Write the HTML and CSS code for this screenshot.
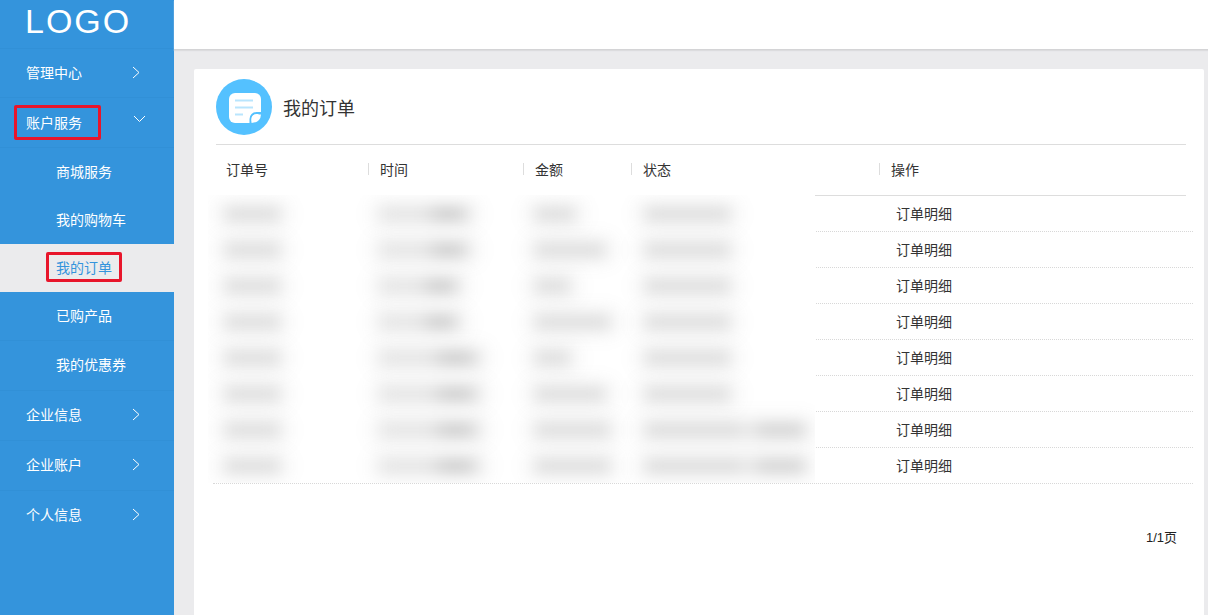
FILE: index.html
```html
<!DOCTYPE html>
<html lang="zh-CN">
<head>
<meta charset="utf-8">
<title>我的订单</title>
<link rel="stylesheet" href="styles.css">
</head>
<body>
<div class="app">
  <aside class="sidebar">
    <div class="logo">LOGO</div>
    <nav class="nav">
      <a class="nav-item">管理中心<svg class="chev" viewBox="0 0 8 13"><path d="M1 1l6 5.500L1 12"/></svg></a>
      <a class="nav-item">账户服务<svg class="chev-down" viewBox="0 0 13 8"><path d="M1 1l5.500 5.500L12 1"/></svg><span class="mark mark-a"></span></a>
      <a class="sub-item">商城服务</a>
      <a class="sub-item">我的购物车</a>
      <a class="sub-item sub-active">我的订单<span class="mark mark-b"></span></a>
      <a class="sub-item sub-line">已购产品</a>
      <a class="sub-item sub-last">我的优惠券</a>
      <a class="nav-item nav-low">企业信息<svg class="chev" viewBox="0 0 8 13"><path d="M1 1l6 5.500L1 12"/></svg></a>
      <a class="nav-item nav-low">企业账户<svg class="chev" viewBox="0 0 8 13"><path d="M1 1l6 5.500L1 12"/></svg></a>
      <a class="nav-item nav-low nav-final">个人信息<svg class="chev" viewBox="0 0 8 13"><path d="M1 1l6 5.500L1 12"/></svg></a>
    </nav>
  </aside>
  <div class="main">
    <header class="topbar"></header>
    <section class="card">
      <div class="title-row">
        <svg class="title-icon" viewBox="0 0 56 56">
          <circle cx="28" cy="28" r="28" fill="#54c1ff"/>
          <path d="M19 14h20a6 6 0 0 1 6 6v13l-11 11H19a6 6 0 0 1-6-6V20a6 6 0 0 1 6-6z" fill="#fff"/>
          <path d="M19 21.500h18M19 28.500h18M19 35.500h8" stroke="#b9e5fd" stroke-width="2" fill="none"/>
          <path d="M34.500 45v-5a6 6 0 0 1 6-6h5" stroke="#54c1ff" stroke-width="2" fill="none"/>
          <path d="M35.500 44v-4a4.500 4.500 0 0 1 4.500-4.500h5q-.5 8-9.500 8.500z" fill="#fff"/>
        </svg>
        <h1 class="title">我的订单</h1>
      </div>
      <div class="table-head">
        <div class="th">订单号</div>
        <div class="th th-sep">时间</div>
        <div class="th th-sep">金额</div>
        <div class="th th-sep">状态</div>
        <div class="th th-sep">操作</div>
      </div>
      <div class="rows">
        <div class="row"><a class="op">订单明细</a></div>
        <div class="row"><a class="op">订单明细</a></div>
        <div class="row"><a class="op">订单明细</a></div>
        <div class="row"><a class="op">订单明细</a></div>
        <div class="row"><a class="op">订单明细</a></div>
        <div class="row"><a class="op">订单明细</a></div>
        <div class="row"><a class="op">订单明细</a></div>
        <div class="row"><a class="op">订单明细</a></div>
        <div class="redacted">
          <div class="r-row"><i class="bar" style="width:55px"></i><i class="bar bar-time" style="width:90px"></i><i class="bar" style="width:40px"></i><i class="bar" style="width:85px"></i></div>
          <div class="r-row"><i class="bar" style="width:55px"></i><i class="bar bar-time" style="width:90px"></i><i class="bar" style="width:70px"></i><i class="bar" style="width:85px"></i></div>
          <div class="r-row"><i class="bar" style="width:55px"></i><i class="bar bar-time" style="width:80px"></i><i class="bar" style="width:35px"></i><i class="bar" style="width:85px"></i></div>
          <div class="r-row"><i class="bar" style="width:55px"></i><i class="bar bar-time" style="width:80px"></i><i class="bar" style="width:75px"></i><i class="bar" style="width:85px"></i></div>
          <div class="r-row"><i class="bar" style="width:55px"></i><i class="bar bar-time" style="width:100px"></i><i class="bar" style="width:35px"></i><i class="bar" style="width:85px"></i></div>
          <div class="r-row"><i class="bar" style="width:55px"></i><i class="bar bar-time" style="width:100px"></i><i class="bar" style="width:70px"></i><i class="bar" style="width:85px"></i></div>
          <div class="r-row"><i class="bar" style="width:55px"></i><i class="bar bar-time" style="width:100px"></i><i class="bar" style="width:75px"></i><i class="bar bar-long" style="width:160px"></i></div>
          <div class="r-row"><i class="bar" style="width:55px"></i><i class="bar bar-time" style="width:100px"></i><i class="bar" style="width:75px"></i><i class="bar bar-long" style="width:160px"></i></div>
        </div>
      </div>
      <div class="pager">1/1页</div>
    </section>
  </div>
</div>
</body>
</html>
```
FILE: styles.css
```css
* { box-sizing: border-box; }
html, body { margin: 0; height: 100%; overflow: hidden; }
body {
  font-family: "Noto Sans CJK SC", "Liberation Sans", sans-serif;
  font-size: 14px;
  color: #333;
  background: #ebebed;
}
.app { display: flex; height: 615px; }

.sidebar { width: 174px; flex: none; background: #3494dc; color: #fff; }
.logo {
  height: 49px;
  padding-left: 25px;
  font-family: "Liberation Sans", sans-serif;
  font-size: 34px;
  line-height: 42px;
  letter-spacing: 2px;
  border-bottom: 1px solid #3190d7;
}
.nav { display: flex; flex-direction: column; }
.nav-item {
  position: relative;
  display: flex;
  align-items: center;
  height: 50px;
  padding: 0 0 2px 26px;
  border-bottom: 1px solid #3190d7;
}
.nav-item:first-child { height: 49px; }
.nav-low { padding-bottom: 4px; }
.nav-final { border-bottom: 0; }
.chev {
  position: absolute;
  left: 132px;
  top: 50%;
  width: 8px;
  height: 13px;
  margin-top: -7px;
  fill: none;
  stroke: #fff;
  stroke-width: 1;
}
.nav-low .chev { margin-top: -8px; }
.chev-down {
  position: absolute;
  left: 133px;
  top: 17px;
  width: 13px;
  height: 8px;
  fill: none;
  stroke: #fff;
  stroke-width: 1;
}
.sub-item {
  position: relative;
  display: flex;
  align-items: center;
  height: 48px;
  padding: 0 0 2px 56px;
}
.sub-line { height: 49px; border-bottom: 1px solid #3190d7; }
.sub-last { height: 50px; padding-bottom: 4px; border-bottom: 1px solid #3190d7; }
.sub-active { background: #ebebed; color: #3494dc; }
.mark {
  position: absolute;
  border: 3px solid #e8152b;
  border-radius: 2px;
}
.mark-a { left: 14px; top: 7px; width: 87px; height: 35px; }
.mark-b { left: 46px; top: 8px; width: 76px; height: 30px; }

.main { flex: 1; min-width: 0; display: flex; flex-direction: column; }
.topbar {
  height: 50px;
  flex: none;
  background: #fff;
  border-bottom: 1px solid #d4d4d6;
  box-shadow: 0 1px 1px #dcdcde;
}
.card {
  flex: 1;
  margin: 19px 4px 0 20px;
  background: #fff;
  border-radius: 2px 2px 0 0;
  padding: 10px 11px 0 19px;
}
.title-row {
  display: flex;
  align-items: center;
  gap: 11px;
  height: 66px;
  margin: 0 7px 0 3px;
  padding-bottom: 10px;
  border-bottom: 1px solid #ddd;
}
.title-icon { width: 56px; height: 56px; flex: none; }
.title { margin: 0; font-size: 18px; font-weight: 400; color: #333; }

.table-head {
  display: grid;
  grid-template-columns: 152px 155px 108px 248px 1fr;
  align-items: center;
  height: 51px;
  padding-bottom: 2px;
  margin: 0 7px 0 3px;
  border-bottom: 1px solid #ddd;
}
.th { padding-left: 10px; position: relative; }
.th-sep { padding-left: 12px; }
.th-sep::before {
  content: "";
  position: absolute;
  left: 0;
  top: 50%;
  height: 12px;
  margin-top: -6px;
  border-left: 1px solid #ddd;
}

.rows { position: relative; }
.row {
  height: 36px;
  display: flex;
  align-items: center;
  padding: 0 0 2px 683px;
  border-bottom: 1px dotted #d8d8d8;
}
.redacted {
  position: absolute;
  left: -5px;
  top: -1px;
  width: 607px;
  height: 288px;
  padding-top: 1px;
  background: #fff;
  overflow: hidden;
}
.r-row {
  display: grid;
  grid-template-columns: 155px 155px 110px 1fr;
  align-items: center;
  height: 36px;
  padding-left: 17px;
}
.bar {
  display: block;
  height: 10px;
  background: #d2d2d2;
  box-shadow: 0 0 14px 9px rgba(0, 0, 0, 0.045);
  filter: blur(8px);
}
.bar-time { background: linear-gradient(90deg, #dcdcdc 0 50%, #b8b8b8 65% 85%, #dcdcdc 100%); }
.bar-long { background: linear-gradient(90deg, #d0d0d0 0 58%, #e8e8e8 64%, #e8e8e8 66%, #c4c4c4 72% 100%); }
.pager {
  margin: 43px 16px 0 0;
  font-family: "Liberation Sans", "Noto Sans CJK SC", sans-serif;
  text-align: right;
  font-size: 13px;
  color: #222;
}
```
